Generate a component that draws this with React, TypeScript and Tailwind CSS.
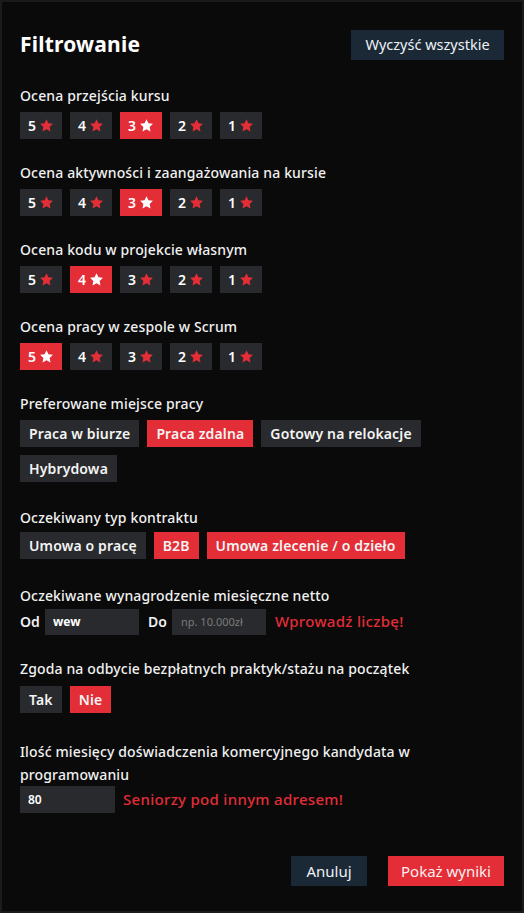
import React from 'react';

// Filter modal — ratings, workplace, contract, salary and experience

const RED = 'bg-[#e32d37]';
const GREY = 'bg-[#292a2d]';
const LABEL = 'text-[14px] leading-[22px] text-[#f1f1f1] font-medium tracking-[0.01em]';

function Star({ active }: { active: boolean }) {
  return (
    <svg viewBox="0 0 24 24" className="w-[15px] h-[15px]" aria-hidden="true">
      <path
        d="M12 1.8l3.1 6.6 7.2.9-5.3 5 1.4 7.1L12 17.9l-6.4 3.5 1.4-7.1-5.3-5 7.2-.9z"
        fill={active ? '#ffffff' : '#e32d37'}
      />
    </svg>
  );
}

function RatingRow({ label, selected, className }: { label: string; selected: number; className: string }) {
  return (
    <section className={className}>
      <h3 className={LABEL}>{label}</h3>
      <div className="mt-[5px] flex gap-[8px]">
        {[5, 4, 3, 2, 1].map((n) => (
          <button
            key={n}
            type="button"
            className={`h-[27px] w-[42px] flex items-center justify-center gap-[3px] text-[14px] font-semibold text-white ${
              n === selected ? RED : GREY
            }`}
          >
            <span>{n}</span>
            <Star active={n === selected} />
          </button>
        ))}
      </div>
    </section>
  );
}

function Chips({
  label,
  items,
  className,
  rowClass,
}: {
  label: string;
  items: { text: string; on: boolean }[];
  className: string;
  rowClass: string;
}) {
  return (
    <section className={className}>
      <h3 className={LABEL}>{label}</h3>
      <div className={`flex flex-wrap gap-[8px] ${rowClass}`}>
        {items.map((it) => (
          <button
            key={it.text}
            type="button"
            className={`h-[27px] px-[9px] text-[14px] font-semibold tracking-[0.01em] text-[#f4f4f4] ${
              it.on ? RED : GREY
            }`}
          >
            {it.text}
          </button>
        ))}
      </div>
    </section>
  );
}

export default function App() {
  return (
    <div
      className="w-[524px] h-[913px] bg-[#0a0a0a] border-2 border-[#1b1b1b] px-[18px] flex flex-col"
      style={{ fontFamily: '"Noto Sans", "Open Sans", sans-serif' }}
    >
      <header className="mt-[27px] flex items-center justify-between">
        <h1 className="text-[21px] font-bold text-white tracking-[0.01em]">Filtrowanie</h1>
        <button
          type="button"
          className="h-[30px] w-[153px] bg-[#1b2937] text-[14.5px] text-[#eef2f6]"
        >
          Wyczyść wszystkie
        </button>
      </header>

      <RatingRow className="mt-[24px]" label="Ocena przejścia kursu" selected={3} />
      <RatingRow className="mt-[23px]" label="Ocena aktywności i zaangażowania na kursie" selected={3} />
      <RatingRow className="mt-[23px]" label="Ocena kodu w projekcie własnym" selected={4} />
      <RatingRow className="mt-[23px]" label="Ocena pracy w zespole w Scrum" selected={5} />

      <Chips
        className="mt-[23px]"
        rowClass="mt-[5px]"
        label="Preferowane miejsce pracy"
        items={[
          { text: 'Praca w biurze', on: false },
          { text: 'Praca zdalna', on: true },
          { text: 'Gotowy na relokacje', on: false },
          { text: 'Hybrydowa', on: false },
        ]}
      />

      <Chips
        className="mt-[25px]"
        rowClass="mt-[3px]"
        label="Oczekiwany typ kontraktu"
        items={[
          { text: 'Umowa o pracę', on: false },
          { text: 'B2B', on: true },
          { text: 'Umowa zlecenie / o dzieło', on: true },
        ]}
      />

      <section className="mt-[26px]">
        <h3 className={LABEL}>Oczekiwane wynagrodzenie miesięczne netto</h3>
        <div className="mt-[2px] flex items-center text-[14px] font-semibold text-[#f1f1f1]">
          <span className="w-[25px]">Od</span>
          <input
            defaultValue="wew"
            className="h-[26px] w-[94px] bg-[#292a2d] px-[8px] text-[12px] font-bold text-white outline-none"
          />
          <span className="ml-[9px] w-[24px]">Do</span>
          <input
            placeholder="np. 10.000zł"
            className="h-[26px] w-[94px] bg-[#292a2d] px-[9px] text-[11px] font-normal text-white placeholder:text-[#7a7a7a] outline-none"
          />
          <span className="ml-[9px] text-[15px] text-[#e32d37] font-medium tracking-[0.02em]">Wprowadź liczbę!</span>
        </div>
      </section>

      <Chips
        className="mt-[23px]"
        rowClass="mt-[6px]"
        label="Zgoda na odbycie bezpłatnych praktyk/stażu na początek"
        items={[
          { text: 'Tak', on: false },
          { text: 'Nie', on: true },
        ]}
      />

      <section className="mt-[27px]">
        <h3 className="text-[14px] leading-[23px] text-[#f1f1f1] font-medium tracking-[0.01em]">
          Ilość miesięcy doświadczenia komercyjnego kandydata w programowaniu
        </h3>
        <div className="flex items-center">
          <input
            defaultValue="80"
            className="h-[27px] w-[95px] bg-[#292a2d] px-[8px] text-[12px] font-semibold text-white outline-none"
          />
          <span className="ml-[8px] text-[15px] text-[#e32d37] font-medium tracking-[0.02em]">
            Seniorzy pod innym adresem!
          </span>
        </div>
      </section>

      <footer className="mt-auto mb-[25px] flex justify-end gap-[21px]">
        <button type="button" className="h-[30px] w-[76px] bg-[#1b2937] text-[15px] text-[#eef2f6]">
          Anuluj
        </button>
        <button type="button" className="h-[30px] w-[116px] bg-[#e32d37] text-[15px] text-[#fbeff0]">
          Pokaż wyniki
        </button>
      </footer>
    </div>
  );
}
